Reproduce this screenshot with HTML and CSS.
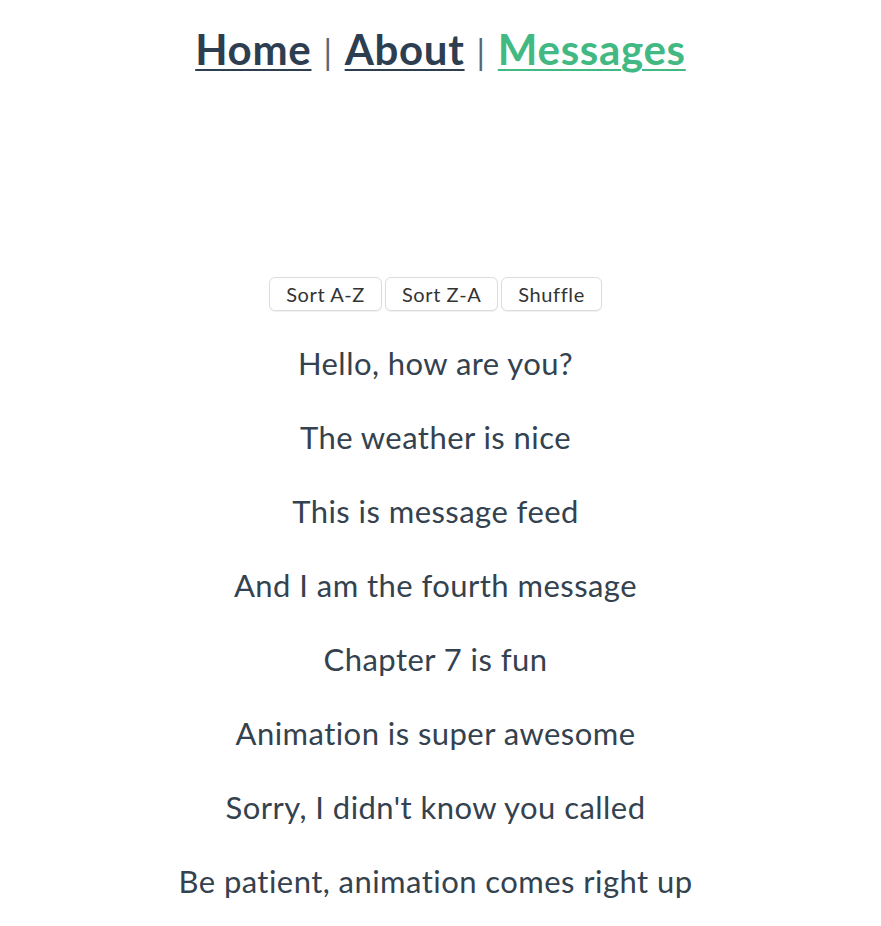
FILE: index.html
```html
<!DOCTYPE html>
<html lang="en">
<head>
<meta charset="utf-8">
<title>Messages</title>
<link rel="stylesheet" href="styles.css">
</head>
<body>
<div class="app">
  <nav class="nav">
    <a class="nav-link" href="#">Home</a>
    <span class="sep">|</span>
    <a class="nav-link" href="#">About</a>
    <span class="sep">|</span>
    <a class="nav-link active" href="#">Messages</a>
  </nav>
  <main class="content">
    <div class="controls">
      <button class="btn">Sort A-Z</button>
      <button class="btn">Sort Z-A</button>
      <button class="btn">Shuffle</button>
    </div>
    <div class="messages">
      <p class="msg">Hello, how are you?</p>
      <p class="msg">The weather is nice</p>
      <p class="msg">This is message feed</p>
      <p class="msg">And I am the fourth message</p>
      <p class="msg">Chapter 7 is fun</p>
      <p class="msg">Animation is super awesome</p>
      <p class="msg">Sorry, I didn't know you called</p>
      <p class="msg">Be patient, animation comes right up</p>
    </div>
  </main>
</div>
</body>
</html>
```

FILE: styles.css
```css
html, body {
  margin: 0;
  padding: 0;
  background: #ffffff;
}

.app {
  font-family: Lato, "Noto Sans", sans-serif;
  color: #2c3e50;
  text-align: center;
  display: flex;
  flex-direction: column;
  align-items: center;
}

.nav {
  margin-top: 23px;
  font-size: 42px;
  font-weight: 700;
  line-height: 52px;
  letter-spacing: 0.7px;
  display: flex;
  gap: 12px;
  align-items: baseline;
}

.nav-link {
  color: #2c3e50;
  text-decoration: underline;
  text-decoration-thickness: 2px;
  text-underline-offset: 4px;
}

.nav-link.active {
  color: #42b983;
}

.sep {
  color: #5a6672;
  font-weight: 400;
  font-size: 34px;
}

.content {
  display: flex;
  flex-direction: column;
  align-items: center;
  padding-right: 10px;
  box-sizing: border-box;
  width: 100%;
}

.controls {
  margin-top: 199px;
  display: flex;
  gap: 3px;
}

.btn {
  font-family: Lato, "Noto Sans", sans-serif;
  font-size: 20px;
  letter-spacing: 0.6px;
  color: #333;
  background: #fff;
  border: 1.5px solid #dcdcdc;
  border-radius: 6px;
  height: 34px;
  padding: 0 16px;
  box-shadow: 0 1px 1px rgba(0,0,0,0.06);
}

.messages {
  margin-top: 15px;
  display: flex;
  flex-direction: column;
}

.msg {
  margin: 0;
  font-size: 31px;
  letter-spacing: 0.45px;
  line-height: 74px;
  color: #34424f;
}
```
